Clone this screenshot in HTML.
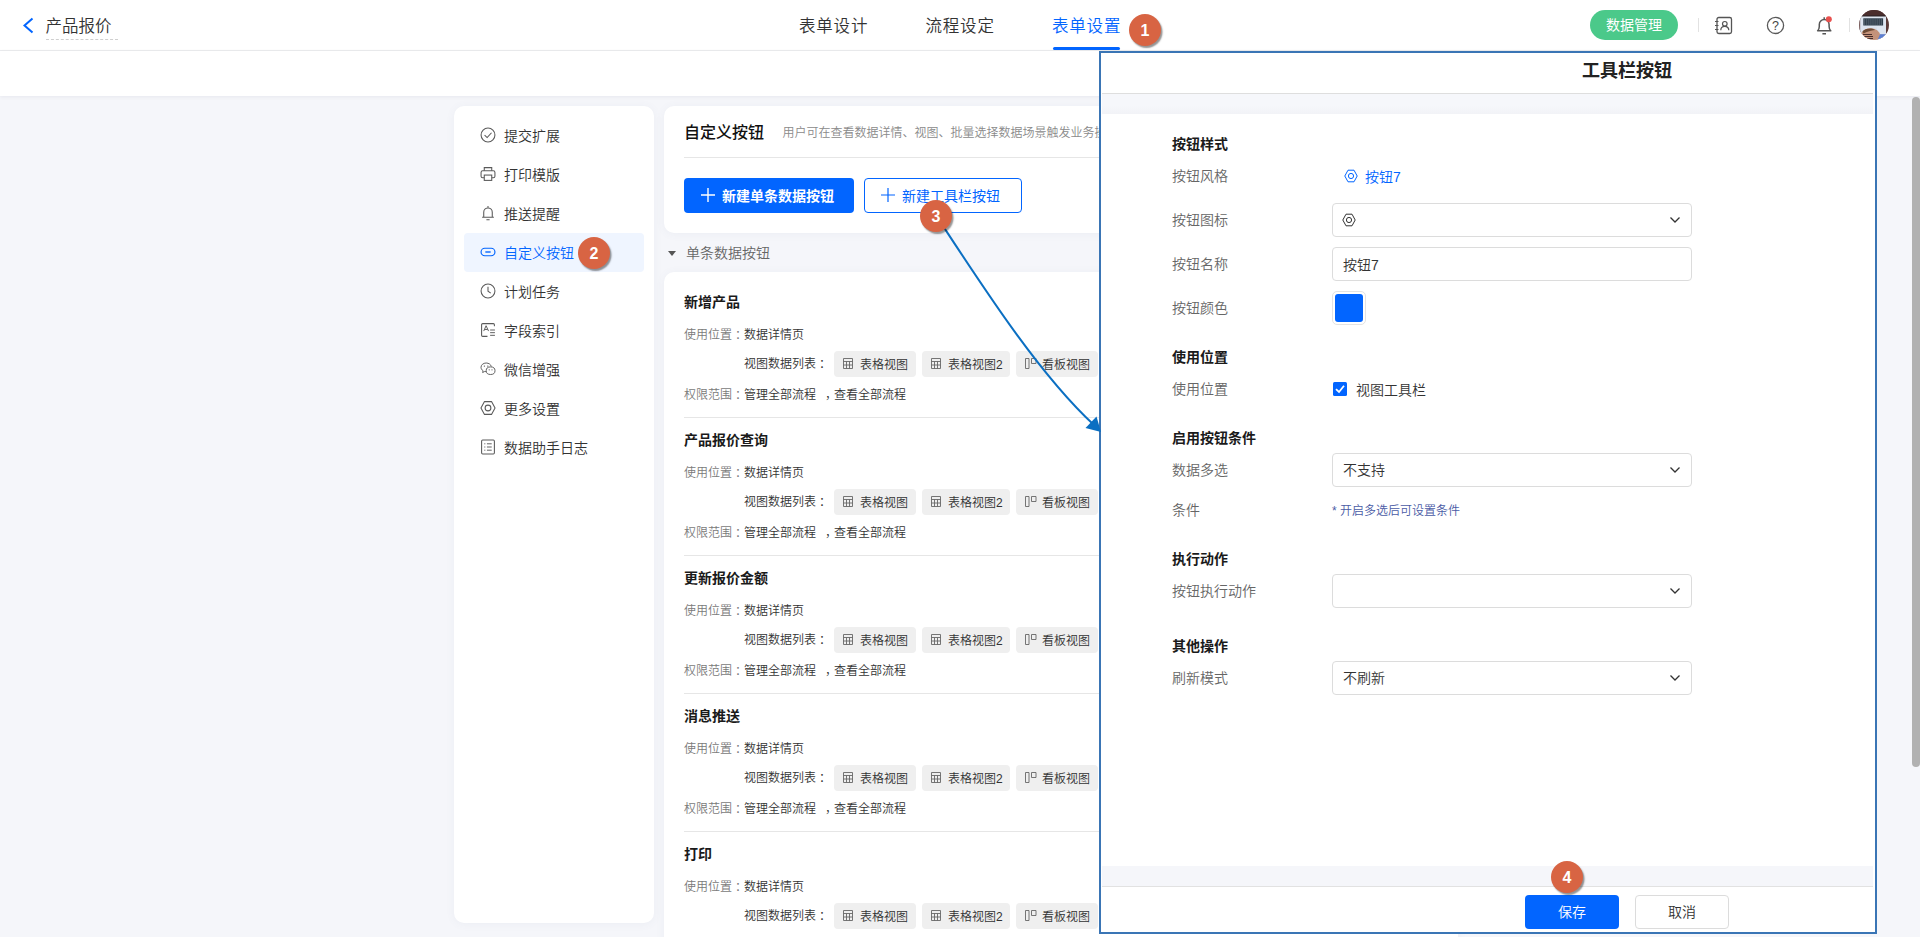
<!DOCTYPE html>
<html lang="zh-CN">
<head>
<meta charset="utf-8">
<title>产品报价</title>
<style>
*{box-sizing:border-box;margin:0;padding:0}
html,body{width:1920px;height:937px;overflow:hidden;background:#f5f6fa}
body{font-family:"Liberation Sans","Noto Sans CJK SC",sans-serif;font-size:14px;color:#1f1f1f;position:relative;font-weight:350}
.abs{position:absolute}
/* header */
#hdr{position:absolute;left:0;top:0;width:1920px;height:51px;background:#fff;border-bottom:1px solid #ebecee}
#sub{position:absolute;left:0;top:51px;width:1920px;height:45px;background:#fff;box-shadow:0 1px 4px rgba(60,70,100,.08)}
#back{position:absolute;left:22px;top:17px}
#title{position:absolute;left:45.5px;top:14px;font-size:16.5px;letter-spacing:.8px;white-space:nowrap;line-height:24px;color:#333;letter-spacing:0}
#title-ul{position:absolute;left:46px;top:39px;width:72px;border-top:1px dashed #cfcfcf}
.tab{position:absolute;top:14px;font-size:16.5px;letter-spacing:.8px;white-space:nowrap;line-height:24px;color:#333}
.tab.on{color:#0265ff}
#tabline{position:absolute;left:1053px;top:47px;width:67px;height:3px;background:#0265ff;border-radius:2px}
#dm{position:absolute;left:1590px;top:10px;width:88px;height:30px;border-radius:15px;background:#4bc98a;color:#fff;font-size:14px;line-height:31px;text-align:center;font-weight:400}
.vsep{position:absolute;top:18px;width:1px;height:14px;background:#e2e2e2}
/* badges */
.bdg{position:absolute;width:32px;height:32px;border-radius:50%;background:#d86443;color:#fff;font-weight:bold;font-size:16px;line-height:33px;text-align:center;box-shadow:1.5px 2px 1.5px rgba(0,0,0,.42);font-family:"Liberation Sans",sans-serif}
/* sidebar */
#side{position:absolute;left:454px;top:106px;width:200px;height:817px;background:#fff;border-radius:10px;box-shadow:0 1px 10px rgba(90,100,140,.06)}
.mi{position:absolute;left:10px;width:180px;height:39px;border-radius:4px;font-size:14px;line-height:41px;color:#333;padding-left:40px}
.mi svg{position:absolute;left:16px;top:11px;width:16px;height:16px}
.mi.on{background:#eff5ff;color:#0265ff}
/* main */
#card1{position:absolute;left:664px;top:106px;width:794px;height:127px;background:#fff;border-radius:10px;box-shadow:0 1px 10px rgba(90,100,140,.06)}
#card2{position:absolute;left:664px;top:272px;width:794px;height:700px;background:#fff;border-radius:10px;box-shadow:0 1px 10px rgba(90,100,140,.06)}

#card1 h2{position:absolute;left:20px;top:15px;font-size:16px;line-height:24px;font-weight:500;color:#111}
#card1 .desc{position:absolute;left:118.5px;top:18px;font-size:12px;line-height:18px;color:#8a8a8a;white-space:nowrap}
#card1 .hr{position:absolute;left:20px;top:51px;width:680px;height:1px;background:#e6e6e6}
.btn{position:absolute;height:35px;border-radius:4px;font-size:14px;line-height:37px;white-space:nowrap}
#b1{left:20px;top:72px;width:170px;background:#0265ff;color:#fff;font-weight:bold;padding-left:38px}
#b2{left:200px;top:72px;width:158px;background:#fff;border:1px solid #0265ff;color:#0265ff;line-height:35px;padding-left:37px;font-weight:400}
.btn svg{position:absolute;left:17px;top:10px}
#b2 svg{left:16px;top:9px}
#sec{position:absolute;left:686px;top:243px;font-size:14px;line-height:20px;color:#666}
#tri{position:absolute;left:668px;top:251px;width:0;height:0;border-left:4.5px solid transparent;border-right:4.5px solid transparent;border-top:5px solid #555}
.it{position:absolute;left:20px;width:700px;height:138px}
.it h3{position:absolute;left:0;top:20px;font-size:14px;line-height:20px;font-weight:bold;color:#1a1a1a}
.it .l{position:absolute;left:0;font-size:12px;line-height:18px;color:#7a7a7a;white-space:nowrap}
.it .v{position:absolute;left:60px;font-size:12px;line-height:18px;color:#333;white-space:nowrap}
.chip{position:absolute;top:79px;height:26px;border-radius:4px;background:#efefef;font-size:12px;line-height:28px;color:#333;padding-left:26px;white-space:nowrap}
.chip svg{position:absolute;left:8px;top:7px}
.it .hr{position:absolute;left:0;top:145px;width:700px;height:1px;background:#e6e6e6}

/* panel */
#pnl{position:absolute;left:1099px;top:51px;width:778px;height:883px;border:2px solid #3a75b5;background:#fff;overflow:hidden}
#pin{position:absolute;left:0;top:0;width:772px;height:879px;background:#fff}
#ptitle{position:absolute;left:1px;top:0;width:771px;height:41px;border-bottom:1px solid #dedede;background:#fff}
#ptitle span{position:absolute;left:480px;top:5px;font-size:18px;line-height:26px;font-weight:bold;color:#222;white-space:nowrap}
#pg1{position:absolute;left:1px;top:41px;width:771px;height:20px;background:linear-gradient(#f6f7fb 55%,#f2f3f7)}
#pg2{position:absolute;left:1px;top:813px;width:771px;height:21px;background:#f5f6fa;border-bottom:1px solid #e2e2e2}
.sh{position:absolute;left:71px;font-size:14px;line-height:20px;font-weight:bold;color:#1a1a1a;white-space:nowrap}
.lb{position:absolute;left:71px;font-size:14px;line-height:20px;color:#666;white-space:nowrap}
.box{position:absolute;left:231px;width:360px;height:34px;border:1px solid #dcdcdc;border-radius:4px;background:#fff;font-size:14px;line-height:34px;color:#333;padding-left:10px}
.box .cv{position:absolute;right:10px;top:12px}
.pb{position:absolute;top:842px;width:94px;height:34px;border-radius:4px;font-size:14px;line-height:34px;text-align:center}
.it i{font-style:normal;position:relative;left:3px}
.it .v b{font-weight:inherit;margin-left:9px;margin-right:-3px}
</style>
</head>
<body>
<div id="hdr"></div>
<div id="sub"></div>
<svg id="back" width="12" height="17" viewBox="0 0 12 17"><path d="M10.5 1.5 L2.5 8.5 L10.5 15.5" fill="none" stroke="#0265ff" stroke-width="2"/></svg>
<div id="title">产品报价</div>
<div id="title-ul"></div>
<div class="tab" style="left:799px">表单设计</div>
<div class="tab" style="left:925.5px">流程设定</div>
<div class="tab on" style="left:1052px">表单设置</div>
<div id="tabline"></div>
<div id="dm">数据管理</div>

<div class="vsep" style="left:1698px"></div><div class="vsep" style="left:1849px"></div>
<svg class="abs" style="left:1714px;top:16px" width="19" height="19" viewBox="0 0 19 19"><rect x="3" y="1.500" width="14.500" height="16" rx="1.800" fill="none" stroke="#555" stroke-width="1.300"/><path d="M1 5.500h3.500 M1 9.500h3.500 M1 13.500h3.500" stroke="#555" stroke-width="1.200"/><circle cx="10.800" cy="7.800" r="2.300" fill="none" stroke="#555" stroke-width="1.200"/><path d="M6.800 14.300c0-2.400 1.700-3.900 4-3.900s4 1.500 4 3.900" fill="none" stroke="#555" stroke-width="1.200"/></svg>
<svg class="abs" style="left:1765.500px;top:16px" width="19" height="19" viewBox="0 0 19 19"><circle cx="9.500" cy="9.400" r="8.100" fill="none" stroke="#5a5a5a" stroke-width="1.300"/><text x="9.500" y="13.800" font-size="12.500" font-family="Liberation Sans, sans-serif" fill="#444" text-anchor="middle">?</text></svg>
<svg class="abs" style="left:1815px;top:15px" width="19" height="21" viewBox="0 0 19 21"><path d="M2.600 15.700 C3.900 14.600 4.300 13.200 4.300 11.500 V9.400 a4.900 4.900 0 0 1 9.800 0 V11.500 c0 1.700 .400 3.100 1.700 4.200 z M7.400 18.700h3.600 M9.200 2.300v1.600" fill="none" stroke="#555" stroke-width="1.500" stroke-linejoin="round"/><circle cx="13.800" cy="4.200" r="3" fill="#e8504e"/></svg>
<svg class="abs" style="left:1859px;top:10px" width="30" height="30" viewBox="0 0 30 30"><defs><clipPath id="avc"><circle cx="15" cy="15" r="15"/></clipPath></defs><g clip-path="url(#avc)"><rect width="30" height="30" fill="#5a3a38"/><rect x="0" y="0" width="30" height="6" fill="#4b2e2d"/><rect x="3" y="5.600" width="24" height="1" fill="#1c1d22"/><rect x="0" y="6.500" width="27" height="18" fill="#dde5f0"/><rect x="0" y="9" width="1.200" height="14" fill="#7a5a58"/><rect x="4.300" y="8.300" width="19.800" height="7.200" fill="#2d3c49"/><path d="M5 10h18.500M5 12h18.500M5 14h18.500" stroke="#8d9aa6" stroke-width=".7" stroke-dasharray="1.200 .9"/><rect x="11" y="17.500" width="7" height="5" fill="#d5deea"/><path d="M0 24.500h30v5.500h-30z" fill="#e9eef5"/><ellipse cx="11.500" cy="25.500" rx="9.500" ry="7.300" fill="#c4927a"/><path d="M3.500 21.500c2-3 9-4.200 12.500-1.500-4 .5-8 1.500-11.500 3.500z" fill="#6e4c36"/><path d="M4 24.500h9M5 26.500h9M7 28.500h7" stroke="#4a2f2c" stroke-width="1"/><path d="M21 24.200h6.500v5.800h-9z" fill="#5c7fd2"/></g></svg>
<div id="side"><div class="mi" style="top:10px"><svg width="15" height="15" viewBox="0 0 15 15"><circle cx="7.5" cy="7.5" r="6.5" fill="none" stroke="#5a5a5a" stroke-width="1"/><path d="M4.3 7.6 L6.7 9.9 L10.8 5.4" fill="none" stroke="#5a5a5a" stroke-width="1"/></svg>提交扩展</div><div class="mi" style="top:49px"><svg width="15" height="15" viewBox="0 0 15 15"><path d="M4 4.5V1.5h7v3" fill="none" stroke="#5a5a5a"/><rect x="1" y="4.5" width="13" height="6.5" rx="1.5" fill="none" stroke="#5a5a5a"/><rect x="4" y="8.5" width="7" height="5" fill="#fff" stroke="#5a5a5a"/></svg>打印模版</div><div class="mi" style="top:88px"><svg width="15" height="15" viewBox="0 0 15 15"><path d="M2 11.5h11 M3.5 11.5V6.8a4 4 0 0 1 8 0v4.7 M6 13.8h3 M7.5 1v1.6" fill="none" stroke="#5a5a5a"/></svg>推送提醒</div><div class="mi on" style="top:127px"><svg width="15" height="15" viewBox="0 0 15 15"><rect x="1" y="4" width="13" height="7" rx="3.5" fill="none" stroke="#0265ff" stroke-width="1.1"/><path d="M5 7.5h5" stroke="#0265ff" stroke-width="1.3"/></svg>自定义按钮</div><div class="mi" style="top:166px"><svg width="15" height="15" viewBox="0 0 15 15"><circle cx="7.5" cy="7.5" r="6.5" fill="none" stroke="#5a5a5a"/><path d="M7.5 3.5v4.2l2.6 1.8" fill="none" stroke="#5a5a5a"/></svg>计划任务</div><div class="mi" style="top:205px"><svg width="15" height="15" viewBox="0 0 15 15"><path d="M13.5 4V2.5a1 1 0 0 0-1-1h-10a1 1 0 0 0-1 1v10a1 1 0 0 0 1 1H7" fill="none" stroke="#5a5a5a"/><path d="M3.5 8.5 L5.7 3.5 L8 8.5 M4.3 7h2.9" fill="none" stroke="#5a5a5a" stroke-width=".9"/><path d="M9.5 7.5h4.5 M9.5 10h4.5 M9.5 12.5h4.5" stroke="#5a5a5a" stroke-width=".9"/></svg>字段索引</div><div class="mi" style="top:244px"><svg width="16" height="15" viewBox="0 0 16 15"><path d="M6.2 10.2c-.5 0-1-.1-1.5-.2L2.6 11l.5-1.7C1.800 8.400 1 7.200 1 5.800 1 3.400 3.300 1.500 6.200 1.500c2.600 0 4.700 1.500 5.100 3.500" fill="none" stroke="#5a5a5a" stroke-width=".95"/><ellipse cx="10.600" cy="9.200" rx="4.400" ry="3.800" fill="#fff" stroke="#5a5a5a" stroke-width=".95"/><circle cx="4.400" cy="4.600" r=".7" fill="#5a5a5a"/><circle cx="7.800" cy="4.600" r=".7" fill="#5a5a5a"/><circle cx="9.200" cy="8.300" r=".6" fill="#5a5a5a"/><circle cx="12" cy="8.300" r=".6" fill="#5a5a5a"/></svg>微信增强</div><div class="mi" style="top:283px"><svg width="15" height="15" viewBox="0 0 15 15"><path d="M4.200 1.500h6.600l3.300 6-3.300 6h-6.600L.9 7.500z" fill="none" stroke="#5a5a5a" stroke-linejoin="round"/><circle cx="7.500" cy="7.500" r="2.700" fill="none" stroke="#5a5a5a"/></svg>更多设置</div><div class="mi" style="top:322px"><svg width="15" height="15" viewBox="0 0 15 15"><rect x="1.500" y="1" width="12" height="13" rx="1" fill="none" stroke="#5a5a5a"/><path d="M4 4.500h1 M6.500 4.500h4.500 M4 7.500h1 M6.500 7.500h4.500 M4 10.500h1 M6.500 10.500h4.500" stroke="#5a5a5a" stroke-width=".9"/></svg>数据助手日志</div></div>
<div id="card1"><h2>自定义按钮</h2><div class="desc">用户可在查看数据详情、视图、批量选择数据场景触发业务操作</div><div class="hr"></div>
<div class="btn" id="b1"><svg width="14" height="14" viewBox="0 0 14 14"><path d="M7 0v14M0 7h14" stroke="#fff" stroke-width="1.4"/></svg>新建单条数据按钮</div>
<div class="btn" id="b2"><svg width="14" height="14" viewBox="0 0 14 14"><path d="M7 0v14M0 7h14" stroke="#0265ff" stroke-width="1.2"/></svg>新建工具栏按钮</div>
</div>
<div id="tri"></div><div id="sec">单条数据按钮</div>
<div id="card2"><div class="it" style="top:0px">
<h3>新增产品</h3>
<div class="l" style="top:54px">使用位置<i>：</i></div><div class="v" style="top:54px">数据详情页</div>
<div class="v" style="top:83px">视图数据列表<i>：</i></div>
<div class="chip" style="left:150px;width:82px"><svg width="10" height="11" viewBox="0 0 10 11" style="left:9px"><path d="M.5 .5h9v10h-9z M.5 3.500h9 M.5 7h9 M3.500 3.500v7 M6.500 3.500v7" fill="none" stroke="#666" stroke-width=".9"/></svg>表格视图</div>
<div class="chip" style="left:238px;width:88px"><svg width="10" height="11" viewBox="0 0 10 11" style="left:9px"><path d="M.5 .5h9v10h-9z M.5 3.500h9 M.5 7h9 M3.500 3.500v7 M6.500 3.500v7" fill="none" stroke="#666" stroke-width=".9"/></svg>表格视图2</div>
<div class="chip" style="left:332px;width:82px"><svg width="12" height="11" viewBox="0 0 12 11" style="left:9px"><path d="M.5 .5h3.500v10h-3.500z M6.500 .5h4.500v5h-4.500z" fill="none" stroke="#666" stroke-width=".9"/></svg>看板视图</div>
<div class="l" style="top:114px">权限范围<i>：</i></div><div class="v" style="top:114px">管理全部流程<b>，</b>查看全部流程</div>
<div class="hr"></div>
</div><div class="it" style="top:138px">
<h3>产品报价查询</h3>
<div class="l" style="top:54px">使用位置<i>：</i></div><div class="v" style="top:54px">数据详情页</div>
<div class="v" style="top:83px">视图数据列表<i>：</i></div>
<div class="chip" style="left:150px;width:82px"><svg width="10" height="11" viewBox="0 0 10 11" style="left:9px"><path d="M.5 .5h9v10h-9z M.5 3.500h9 M.5 7h9 M3.500 3.500v7 M6.500 3.500v7" fill="none" stroke="#666" stroke-width=".9"/></svg>表格视图</div>
<div class="chip" style="left:238px;width:88px"><svg width="10" height="11" viewBox="0 0 10 11" style="left:9px"><path d="M.5 .5h9v10h-9z M.5 3.500h9 M.5 7h9 M3.500 3.500v7 M6.500 3.500v7" fill="none" stroke="#666" stroke-width=".9"/></svg>表格视图2</div>
<div class="chip" style="left:332px;width:82px"><svg width="12" height="11" viewBox="0 0 12 11" style="left:9px"><path d="M.5 .5h3.500v10h-3.500z M6.500 .5h4.500v5h-4.500z" fill="none" stroke="#666" stroke-width=".9"/></svg>看板视图</div>
<div class="l" style="top:114px">权限范围<i>：</i></div><div class="v" style="top:114px">管理全部流程<b>，</b>查看全部流程</div>
<div class="hr"></div>
</div><div class="it" style="top:276px">
<h3>更新报价金额</h3>
<div class="l" style="top:54px">使用位置<i>：</i></div><div class="v" style="top:54px">数据详情页</div>
<div class="v" style="top:83px">视图数据列表<i>：</i></div>
<div class="chip" style="left:150px;width:82px"><svg width="10" height="11" viewBox="0 0 10 11" style="left:9px"><path d="M.5 .5h9v10h-9z M.5 3.500h9 M.5 7h9 M3.500 3.500v7 M6.500 3.500v7" fill="none" stroke="#666" stroke-width=".9"/></svg>表格视图</div>
<div class="chip" style="left:238px;width:88px"><svg width="10" height="11" viewBox="0 0 10 11" style="left:9px"><path d="M.5 .5h9v10h-9z M.5 3.500h9 M.5 7h9 M3.500 3.500v7 M6.500 3.500v7" fill="none" stroke="#666" stroke-width=".9"/></svg>表格视图2</div>
<div class="chip" style="left:332px;width:82px"><svg width="12" height="11" viewBox="0 0 12 11" style="left:9px"><path d="M.5 .5h3.500v10h-3.500z M6.500 .5h4.500v5h-4.500z" fill="none" stroke="#666" stroke-width=".9"/></svg>看板视图</div>
<div class="l" style="top:114px">权限范围<i>：</i></div><div class="v" style="top:114px">管理全部流程<b>，</b>查看全部流程</div>
<div class="hr"></div>
</div><div class="it" style="top:414px">
<h3>消息推送</h3>
<div class="l" style="top:54px">使用位置<i>：</i></div><div class="v" style="top:54px">数据详情页</div>
<div class="v" style="top:83px">视图数据列表<i>：</i></div>
<div class="chip" style="left:150px;width:82px"><svg width="10" height="11" viewBox="0 0 10 11" style="left:9px"><path d="M.5 .5h9v10h-9z M.5 3.500h9 M.5 7h9 M3.500 3.500v7 M6.500 3.500v7" fill="none" stroke="#666" stroke-width=".9"/></svg>表格视图</div>
<div class="chip" style="left:238px;width:88px"><svg width="10" height="11" viewBox="0 0 10 11" style="left:9px"><path d="M.5 .5h9v10h-9z M.5 3.500h9 M.5 7h9 M3.500 3.500v7 M6.500 3.500v7" fill="none" stroke="#666" stroke-width=".9"/></svg>表格视图2</div>
<div class="chip" style="left:332px;width:82px"><svg width="12" height="11" viewBox="0 0 12 11" style="left:9px"><path d="M.5 .5h3.500v10h-3.500z M6.500 .5h4.500v5h-4.500z" fill="none" stroke="#666" stroke-width=".9"/></svg>看板视图</div>
<div class="l" style="top:114px">权限范围<i>：</i></div><div class="v" style="top:114px">管理全部流程<b>，</b>查看全部流程</div>
<div class="hr"></div>
</div><div class="it" style="top:552px">
<h3>打印</h3>
<div class="l" style="top:54px">使用位置<i>：</i></div><div class="v" style="top:54px">数据详情页</div>
<div class="v" style="top:83px">视图数据列表<i>：</i></div>
<div class="chip" style="left:150px;width:82px"><svg width="10" height="11" viewBox="0 0 10 11" style="left:9px"><path d="M.5 .5h9v10h-9z M.5 3.500h9 M.5 7h9 M3.500 3.500v7 M6.500 3.500v7" fill="none" stroke="#666" stroke-width=".9"/></svg>表格视图</div>
<div class="chip" style="left:238px;width:88px"><svg width="10" height="11" viewBox="0 0 10 11" style="left:9px"><path d="M.5 .5h9v10h-9z M.5 3.500h9 M.5 7h9 M3.500 3.500v7 M6.500 3.500v7" fill="none" stroke="#666" stroke-width=".9"/></svg>表格视图2</div>
<div class="chip" style="left:332px;width:82px"><svg width="12" height="11" viewBox="0 0 12 11" style="left:9px"><path d="M.5 .5h3.500v10h-3.500z M6.500 .5h4.500v5h-4.500z" fill="none" stroke="#666" stroke-width=".9"/></svg>看板视图</div>
<div class="l" style="top:114px">权限范围<i>：</i></div><div class="v" style="top:114px">管理全部流程<b>，</b>查看全部流程</div>
<div class="hr"></div>
</div></div>
<div id="pnl"><div id="pin">
<div id="ptitle"><span>工具栏按钮</span></div>
<div id="pg1"></div>
<div class="sh" style="top:81px">按钮样式</div>
<div class="lb" style="top:113px">按钮风格</div>
<div class="abs" style="left:243px;top:116px;height:14px"><svg width="14" height="14" viewBox="0 0 14 14"><path d="M4 1.2h6l3.2 5.8-3.2 5.8h-6L.8 7z" fill="none" stroke="#0265ff" stroke-width="1" stroke-linejoin="round"/><circle cx="7" cy="7" r="2.6" fill="none" stroke="#0265ff" stroke-width="1"/></svg></div>
<div class="abs" style="left:264px;top:114px;font-size:14px;line-height:20px;color:#0265ff">按钮7</div>
<div class="lb" style="top:157px">按钮图标</div>
<div class="box" style="top:150px"><span class="abs" style="left:9px;top:9px;height:14px;line-height:0"><svg width="14" height="14" viewBox="0 0 14 14"><path d="M4 1.2h6l3.2 5.8-3.2 5.8h-6L.8 7z" fill="none" stroke="#333" stroke-width="1" stroke-linejoin="round"/><circle cx="7" cy="7" r="2.6" fill="none" stroke="#333" stroke-width="1"/></svg></span><svg class="cv" width="12" height="8" viewBox="0 0 12 8"><path d="M1.5 1.5 L6 6 L10.5 1.5" fill="none" stroke="#333" stroke-width="1.3"/></svg></div>
<div class="lb" style="top:201px">按钮名称</div>
<div class="box" style="top:194px">按钮7</div>
<div class="lb" style="top:245px">按钮颜色</div>
<div class="abs" style="left:231px;top:238px;width:34px;height:34px;border:1px solid #e3e3e3;border-radius:5px;background:#fff"><div class="abs" style="left:2px;top:2px;width:28px;height:28px;border-radius:3px;background:#0265ff"></div></div>
<div class="sh" style="top:294px">使用位置</div>
<div class="lb" style="top:326px">使用位置</div>
<div class="abs" style="left:232px;top:329px;width:14px;height:14px;border-radius:1.5px;background:#0265ff"><svg width="14" height="14" viewBox="0 0 14 14" style="position:absolute;left:0;top:0"><path d="M3 7.2 L6 10 L11 3.8" fill="none" stroke="#fff" stroke-width="1.8"/></svg></div>
<div class="abs" style="left:255px;top:327px;font-size:14px;line-height:20px;color:#333">视图工具栏</div>
<div class="sh" style="top:375px">启用按钮条件</div>
<div class="lb" style="top:407px">数据多选</div>
<div class="box" style="top:400px;line-height:32px">不支持<svg class="cv" width="12" height="8" viewBox="0 0 12 8"><path d="M1.5 1.5 L6 6 L10.5 1.5" fill="none" stroke="#333" stroke-width="1.3"/></svg></div>
<div class="lb" style="top:447px">条件</div>
<div class="abs" style="left:231px;top:449px;font-size:12px;line-height:18px;color:#4a5ba5;white-space:nowrap">* 开启多选后可设置条件</div>
<div class="sh" style="top:496px">执行动作</div>
<div class="lb" style="top:528px">按钮执行动作</div>
<div class="box" style="top:521px"><svg class="cv" width="12" height="8" viewBox="0 0 12 8"><path d="M1.5 1.5 L6 6 L10.5 1.5" fill="none" stroke="#333" stroke-width="1.3"/></svg></div>
<div class="sh" style="top:583px">其他操作</div>
<div class="lb" style="top:615px">刷新模式</div>
<div class="box" style="top:608px;line-height:32px">不刷新<svg class="cv" width="12" height="8" viewBox="0 0 12 8"><path d="M1.5 1.5 L6 6 L10.5 1.5" fill="none" stroke="#333" stroke-width="1.3"/></svg></div>
<div id="pg2"></div>
<div class="pb" style="left:424px;background:#0265ff;color:#fff">保存</div>
<div class="pb" style="left:534px;background:#fff;border:1px solid #dcdcdc;color:#333;line-height:32px">取消</div>
</div></div>
<svg class="abs" style="left:0;top:0;pointer-events:none" width="1920" height="937" viewBox="0 0 1920 937"><path d="M943 226 C 985 290, 1040 375, 1094 425" fill="none" stroke="#0b6fc2" stroke-width="2"/><path d="M1101 432 L1085.500 428 L1096.500 416.500 Z" fill="#0b6fc2"/></svg>
<div class="bdg" style="left:1129px;top:14px">1</div>
<div class="bdg" style="left:578px;top:237px">2</div>
<div class="bdg" style="left:920px;top:200px">3</div>
<div class="bdg" style="left:1551px;top:861px">4</div>
<div class="abs" style="left:1912px;top:97px;width:8px;height:670px;border-radius:4px;background:#b1b1b1"></div>
</body>
</html>
